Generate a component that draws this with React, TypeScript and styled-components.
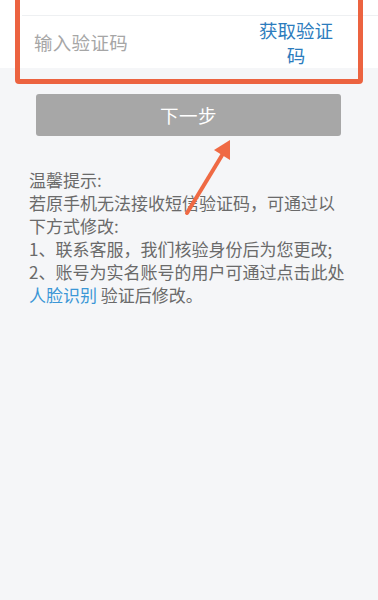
import React from "react";
import styled, { createGlobalStyle } from "styled-components";

const Global = createGlobalStyle`
  html, body { margin: 0; padding: 0; background: #f5f6f8; }
  body { font-family: "Noto Sans CJK SC", "Noto Sans", sans-serif; }
  #root { min-height: 600px; }
`;

const Page = styled.div`
  position: relative;
  min-height: 600px;
  background: #f5f6f8;
  overflow: hidden;
`;

const Card = styled.div`
  background: #ffffff;
  margin-top: -36px;
`;

const Row = styled.div<{ $h: number; $divider?: boolean }>`
  height: ${(p) => p.$h}px;
  display: flex;
  align-items: center;
  padding: 0 42px 0 34px;
  box-sizing: border-box;
  ${(p) => (p.$divider ? "border-bottom: 1px solid #eef0f2; margin-left: 22px; padding-left: 12px;" : "")}
`;

const Faint = styled.span`
  font-size: 19px;
  color: #b9b9b9;
  margin-right: 44px;
`;

const Placeholder = styled.span`
  flex: 1;
  font-size: 18.5px;
  color: #a6a6a6;
  letter-spacing: 0.3px;
`;

const CodeLink = styled.span`
  width: 80px;
  font-size: 18.5px;
  line-height: 25px;
  color: #2c7cbd;
  text-align: center;
  margin-top: 2px;
`;

const Highlight = styled.div`
  position: absolute;
  left: 15px;
  top: -10px;
  width: 348px;
  height: 94px;
  border: 5px solid #ec6340;
  border-radius: 4px;
  box-sizing: border-box;
  pointer-events: none;
`;

const ButtonWrap = styled.div`
  padding: 26px 37px 0 36px;
`;

const NextButton = styled.div`
  height: 42px;
  background: #a7a7a7;
  border-radius: 3px;
  display: flex;
  align-items: center;
  justify-content: center;
  color: #ffffff;
  font-size: 18.5px;
  letter-spacing: 0.5px;
`;

const Tips = styled.div`
  margin: 32px 0 0 29px;
  width: 320px;
  font-size: 17px;
  line-height: 23px;
  color: #6a6a6a;
`;

const TipLine = styled.div``;

const Blue = styled.span`
  color: #3b97d6;
`;

const Arrow = styled.svg`
  position: absolute;
  left: 180px;
  top: 134px;
  width: 60px;
  height: 86px;
  overflow: visible;
`;

export default function App() {
  return (
    <>
      <Global />
      <Page>
        <Card>
          <Row $h={52} $divider>
            <Faint>+86</Faint>
            <Faint>138****</Faint>
          </Row>
          <Row $h={52}>
            <Placeholder>输入验证码</Placeholder>
            <CodeLink>获取验证码</CodeLink>
          </Row>
        </Card>
        <Highlight />
        <ButtonWrap>
          <NextButton>下一步</NextButton>
        </ButtonWrap>
        <Tips>
          <TipLine>温馨提示:</TipLine>
          <TipLine>若原手机无法接收短信验证码，可通过以下方式修改:</TipLine>
          <TipLine>1、联系客服，我们核验身份后为您更改;</TipLine>
          <TipLine>
            2、账号为实名账号的用户可通过点击此处<Blue>人脸识别</Blue> 验证后修改。
          </TipLine>
        </Tips>
        <Arrow viewBox="0 0 60 86">
          <line x1="7" y1="79" x2="44" y2="18" stroke="#ef6a44" strokeWidth="4" strokeLinecap="round" />
          <polygon points="50,6 34,16 50,26" fill="#ef6a44" />
        </Arrow>
      </Page>
    </>
  );
}
